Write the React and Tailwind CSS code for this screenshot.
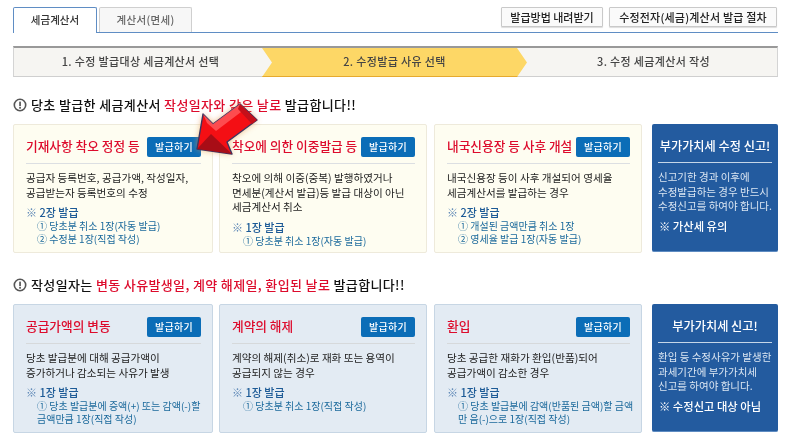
const FF = '"Noto Sans CJK KR","Noto Sans",sans-serif';

function Notice({ children }) {
  return (
    <div className="flex items-center gap-[4px] h-[16px] ml-[13px] text-[13px] font-medium text-[#111] tracking-[0.36px] whitespace-pre">
      <svg width="14" height="14" viewBox="0 0 14 14" className="shrink-0">
        <circle cx="7" cy="7" r="5.7" fill="#fff" stroke="#555" strokeWidth="1.6" />
        <rect x="6.2" y="3.6" width="1.7" height="4.6" fill="#555" />
        <rect x="6.2" y="9" width="1.7" height="1.7" fill="#555" />
      </svg>
      <span>{children}</span>
    </div>
  );
}

function IssueButton() {
  return (
    <button className="w-[54px] h-[20px] shrink-0 rounded-[2px] bg-[#0b6db7] text-white text-[10px] font-medium tracking-[0.3px] leading-[20px] text-center">
      발급하기
    </button>
  );
}

function Card({ w, tone, title, lines, count, subs }) {
  const toneCls = tone === 'y'
    ? 'bg-[#fefdf1] border-[#eeeadb]'
    : 'bg-[#e3ebf3] border-[#c7d6e4]';
  return (
    <div className={`shrink-0 h-full border rounded-[2px] pl-[12px] pr-[11px] ${toneCls}`} style={{ width: w }}>
      <div className={`flex items-center justify-between h-[39px] border-b ${tone === 'y' ? 'border-[#dcdfe2]' : 'border-[#d6d9db]'} pt-[6px]`}>
        <span className="text-[12.7px] font-medium text-[#dd0b2c] whitespace-nowrap pb-[2px]">{title}</span>
        <IssueButton />
      </div>
      <div className="mt-[7px] text-[10.6px] leading-[14.5px] text-[#222] whitespace-nowrap">
        {lines.map((l) => <div key={l}>{l}</div>)}
      </div>
      <div className="mt-[5px] text-[11px] font-medium leading-[15px] text-[#1c5a96] whitespace-nowrap">
        <span className="font-normal text-[#5b86b5]">※</span> {count}
      </div>
      <div className="ml-[11px] text-[10px] leading-[12.5px] text-[#1c6a9c] whitespace-nowrap">
        {subs.map((s) => <div key={s}>{s}</div>)}
      </div>
    </div>
  );
}

function SideCard({ title, lines, note }) {
  return (
    <div className="w-[126px] shrink-0 h-[128px] rounded-[2px] bg-[#235b9f] border-b border-[#5e8cc2] px-[6px] text-white">
      <div className="h-[39px] flex items-center justify-center border-b border-[#c5d6e8] pt-[6px] text-[12.2px] font-medium whitespace-nowrap">{title}</div>
      <div className="mt-[7px] text-[10.5px] leading-[14.5px] text-[#dbe6f2] whitespace-nowrap">
        {lines.map((l) => <div key={l}>{l}</div>)}
      </div>
      <div className="mt-[5px] ml-[1px] text-[11.3px] font-medium leading-[15px] whitespace-nowrap">※ {note}</div>
    </div>
  );
}

function Arrow() {
  const outline = 'M11 57 L17 22 L27 32 L54 12 L71 28 L41 50 L46 62 Z';
  return (
    <svg className="absolute left-[186px] top-[92px] pointer-events-none" width="90" height="72" viewBox="0 0 90 72">
      <defs>
        <filter id="g" x="-30%" y="-30%" width="160%" height="160%">
          <feGaussianBlur stdDeviation="3" />
        </filter>
      </defs>
      <path d={outline} fill="#e8994f" opacity="0.75" filter="url(#g)" />
      <path d={outline} fill="#f40f14" stroke="#3b3561" strokeWidth="1.4" strokeLinejoin="round" />
      <path d="M17 22 L27 32 L54 12 L59 17 L30 39 L21 31 Z" fill="#ff5b5e" opacity="0.8" />
      <path d="M54 12 L71 28 L66 32 L52 17 Z" fill="#c4101a" />
      <path d="M11 57 L25 42 L46 62 Z" fill="#a80d16" />
    </svg>
  );
}

export default function App() {
  return (
    <div className="relative w-[789px] h-[445px] bg-white overflow-hidden pt-[7px] blur-[0.3px]" style={{ fontFamily: FF }}>
      <div className="ml-[13px] mr-[11px] h-[26px] flex items-end border-b border-[#5f8dc4]">
        <div className="w-[84px] h-[26px] -mb-px border border-b-0 border-[#5f8dc4] bg-white rounded-t-[2px] text-[10.5px] font-medium text-[#333] text-center leading-[24px]">세금계산서</div>
        <div className="w-[93px] h-[25px] ml-[2px] border border-b-0 border-[#cfcfcf] bg-[#f7f7f7] rounded-t-[2px] text-[10.5px] font-medium tracking-[0.3px] text-[#666] text-center leading-[23px]">계산서(면세)</div>
        <div className="ml-auto self-start flex gap-[6px] pr-[1px]">
          <div className="w-[102px] h-[20px] border border-[#c9c9c9] bg-[#fafafa] rounded-[1px] text-[11px] font-medium text-[#222] text-center leading-[18px] shadow-[0_1px_1px_#ddd]">발급방법 내려받기</div>
          <div className="w-[168px] h-[20px] border border-[#c9c9c9] bg-[#fafafa] rounded-[1px] text-[11px] font-medium tracking-[0.2px] text-[#222] text-center leading-[18px] shadow-[0_1px_1px_#ddd] whitespace-nowrap">수정전자(세금)계산서 발급 절차</div>
        </div>
      </div>

      <div className="relative ml-[13px] mr-[11px] mt-[13px] h-[31px] flex bg-[#f6f5f2] border-t-2 border-b border-x border-t-[#999] border-x-[#d4d4d4] border-b-[#cfcfcf] text-[11px] font-medium tracking-[0.35px] text-[#444]">
        <div className="w-[253px] shrink-0 text-center leading-[27px]">1. 수정 발급대상 세금계산서 선택</div>
        <div className="w-[265px] -ml-[5px] shrink-0 text-center leading-[27px] bg-[#fdd766] border-b border-[#e6aa2e] h-[29px] [clip-path:polygon(0_0,255px_0,100%_50%,255px_100%,0_100%,10px_50%)]">2. 수정발급 사유 선택</div>
        <div className="flex-1 text-center leading-[27px] pl-[3px]">3. 수정 세금계산서 작성</div>
      </div>

      <div className="mt-[20px]">
        <Notice>
          당초 발급한 세금계산서 <span className="text-[#dd0b2c]">작성일자와 같은 날로</span> 발급합니다!!
        </Notice>
      </div>

      <div className="mt-[11px] ml-[13px] h-[129px] flex">
        <Card w={200} tone="y" title="기재사항 착오 정정 등"
          lines={['공급자 등록번호, 공급가액, 작성일자,', '공급받는자 등록번호의 수정']}
          count="2장 발급" subs={['① 당초분 취소 1장(자동 발급)', '② 수정분 1장(직접 작성)']} />
        <div className="w-[6px]" />
        <Card w={208} tone="y" title="착오에 의한 이중발급 등"
          lines={['착오에 의해 이중(중복) 발행하였거나', '면세분(계산서 발급)등 발급 대상이 아닌', '세금계산서 취소']}
          count="1장 발급" subs={['① 당초분 취소 1장(자동 발급)']} />
        <div className="w-[7px]" />
        <Card w={208} tone="y" title="내국신용장 등 사후 개설"
          lines={['내국신용장 등이 사후 개설되어 영세율', '세금계산서를 발급하는 경우']}
          count="2장 발급" subs={['① 개설된 금액만큼 취소 1장', '② 영세율 발급 1장(자동 발급)']} />
        <div className="w-[10px]" />
        <SideCard title="부가가치세 수정 신고!"
          lines={['신고기한 경과 이후에', '수정발급하는 경우 반드시', '수정신고를 하여야 합니다.']} note="가산세 유의" />
      </div>

      <div className="mt-[24px]">
        <Notice>
          작성일자는 <span className="text-[#dd0b2c]">변동 사유발생일, 계약 해제일, 환입된 날로</span> 발급합니다!!
        </Notice>
      </div>

      <div className="mt-[11px] ml-[13px] h-[129px] flex">
        <Card w={200} tone="b" title="공급가액의 변동"
          lines={['당초 발급분에 대해 공급가액이', '증가하거나 감소되는 사유가 발생']}
          count="1장 발급" subs={['① 당초 발급분에 증액(+) 또는 감액(-)할', '금액만큼 1장(직접 작성)']} />
        <div className="w-[6px]" />
        <Card w={208} tone="b" title="계약의 해제"
          lines={['계약의 해제(취소)로 재화 또는 용역이', '공급되지 않는 경우']}
          count="1장 발급" subs={['① 당초분 취소 1장(직접 작성)']} />
        <div className="w-[7px]" />
        <Card w={208} tone="b" title="환입"
          lines={['당초 공급한 재화가 환입(반품)되어', '공급가액이 감소한 경우']}
          count="1장 발급" subs={['① 당초 발급분에 감액(반품된 금액)할 금액', '만 음(-)으로 1장(직접 작성)']} />
        <div className="w-[10px]" />
        <SideCard title="부가가치세 신고!"
          lines={['환입 등 수정사유가 발생한', '과세기간에 부가가치세', '신고를 하여야 합니다.']} note="수정신고 대상 아님" />
      </div>

      <Arrow />
    </div>
  );
}
